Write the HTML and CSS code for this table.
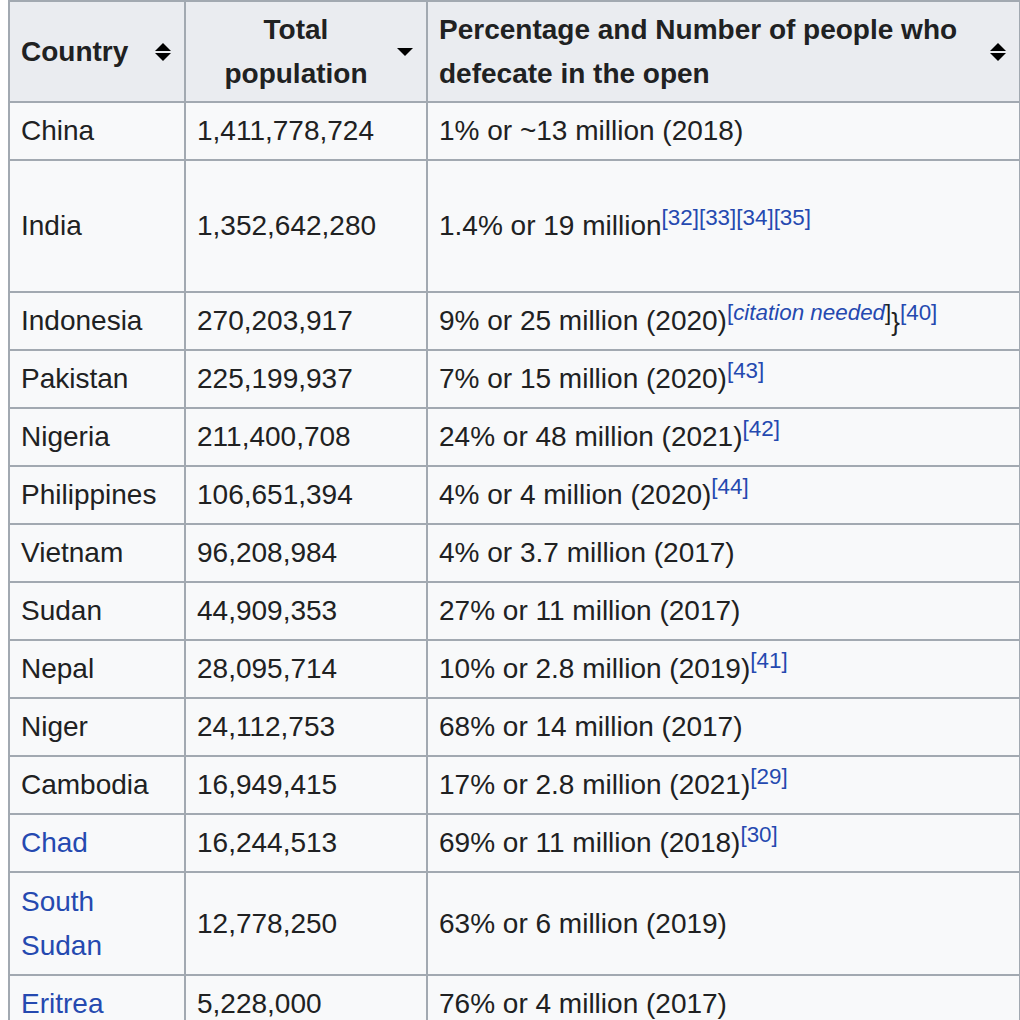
FILE: index.html
```html
<!DOCTYPE html>
<html>
<head>
<meta charset="utf-8">
<link rel="stylesheet" href="styles.css">
</head>
<body>
<table class="wikitable">
  <colgroup>
    <col class="c1"><col class="c2"><col class="c3">
  </colgroup>
  <thead>
    <tr class="head-row">
      <th><div class="hd"><span class="lbl">Country</span><span class="ico"><svg width="16" height="18" viewBox="0 0 16 18"><path d="M0 8 L8 0 L16 8 Z M0 10 L16 10 L8 18 Z" fill="#000"/></svg></span></div></th>
      <th><div class="hd"><span class="lbl center">Total population</span><span class="ico"><svg width="16" height="18" viewBox="0 0 16 18"><path d="M0 5 L16 5 L8 13 Z" fill="#000"/></svg></span></div></th>
      <th><div class="hd"><span class="lbl">Percentage and Number of people who defecate in the open</span><span class="ico"><svg width="16" height="18" viewBox="0 0 16 18"><path d="M0 8 L8 0 L16 8 Z M0 10 L16 10 L8 18 Z" fill="#000"/></svg></span></div></th>
    </tr>
  </thead>
  <tbody>
    <tr><td>China</td><td>1,411,778,724</td><td>1% or ~13 million (2018)</td></tr>
    <tr class="tall"><td>India</td><td>1,352,642,280</td><td>1.4% or 19 million<sup><a>[32]</a></sup><sup><a>[33]</a></sup><sup><a>[34]</a></sup><sup><a>[35]</a></sup></td></tr>
    <tr><td>Indonesia</td><td>270,203,917</td><td>9% or 25 million (2020)<sup class="cn"><a>[</a><i><a>citation needed</a></i>]</sup><span class="brace">}</span><sup><a>[40]</a></sup></td></tr>
    <tr><td>Pakistan</td><td>225,199,937</td><td>7% or 15 million (2020)<sup><a>[43]</a></sup></td></tr>
    <tr><td>Nigeria</td><td>211,400,708</td><td>24% or 48 million (2021)<sup><a>[42]</a></sup></td></tr>
    <tr><td>Philippines</td><td>106,651,394</td><td>4% or 4 million (2020)<sup><a>[44]</a></sup></td></tr>
    <tr><td>Vietnam</td><td>96,208,984</td><td>4% or 3.7 million (2017)</td></tr>
    <tr><td>Sudan</td><td>44,909,353</td><td>27% or 11 million (2017)</td></tr>
    <tr><td>Nepal</td><td>28,095,714</td><td>10% or 2.8 million (2019)<sup><a>[41]</a></sup></td></tr>
    <tr><td>Niger</td><td>24,112,753</td><td>68% or 14 million (2017)</td></tr>
    <tr><td>Cambodia</td><td>16,949,415</td><td>17% or 2.8 million (2021)<sup><a>[29]</a></sup></td></tr>
    <tr><td><a>Chad</a></td><td>16,244,513</td><td>69% or 11 million (2018)<sup><a>[30]</a></sup></td></tr>
    <tr class="mid"><td><a>South Sudan</a></td><td>12,778,250</td><td>63% or 6 million (2019)</td></tr>
    <tr><td><a>Eritrea</a></td><td>5,228,000</td><td>76% or 4 million (2017)</td></tr>
  </tbody>
</table>
</body>
</html>
```

FILE: styles.css
```css
html, body {
  background: #ffffff;
}
body {
  margin: 0 0 0 8px;
  font-family: "Liberation Sans", Arial, sans-serif;
  color: #202122;
}
.wikitable {
  border-collapse: collapse;
  table-layout: fixed;
  width: 1011px;
  font-size: 28px;
  line-height: 44px;
  background: #f8f9fa;
  border: 2px solid #a2a9b1;
}
.c1 { width: 176px; }
.c2 { width: 242px; }
.c3 { width: 593px; }
.wikitable th,
.wikitable td {
  border: 2px solid #a2a9b1;
  padding: 5.5px 11px;
  vertical-align: middle;
}
.wikitable td {
  height: 45px;
}
.wikitable th {
  background: #eaecf0;
  font-weight: bold;
  text-align: left;
  height: 88px;
}
.hd {
  display: flex;
  align-items: center;
}
.lbl {
  flex: 1;
  min-width: 0;
}
.lbl.center {
  text-align: center;
}
.ico {
  flex: 0 0 20px;
  display: flex;
  justify-content: center;
  align-items: center;
}
.ico svg {
  display: block;
}
.tall td {
  height: 119px;
}
.mid td {
  height: 90px;
}
a {
  color: #2549b0;
  text-decoration: none;
}
sup {
  font-size: 22.4px;
  line-height: 1;
  vertical-align: super;
}
sup.cn {
  white-space: nowrap;
}
sup.cn i {
  font-style: italic;
}
.brace {
  font-size: 26px;
  position: relative;
  top: 1px;
}
```
